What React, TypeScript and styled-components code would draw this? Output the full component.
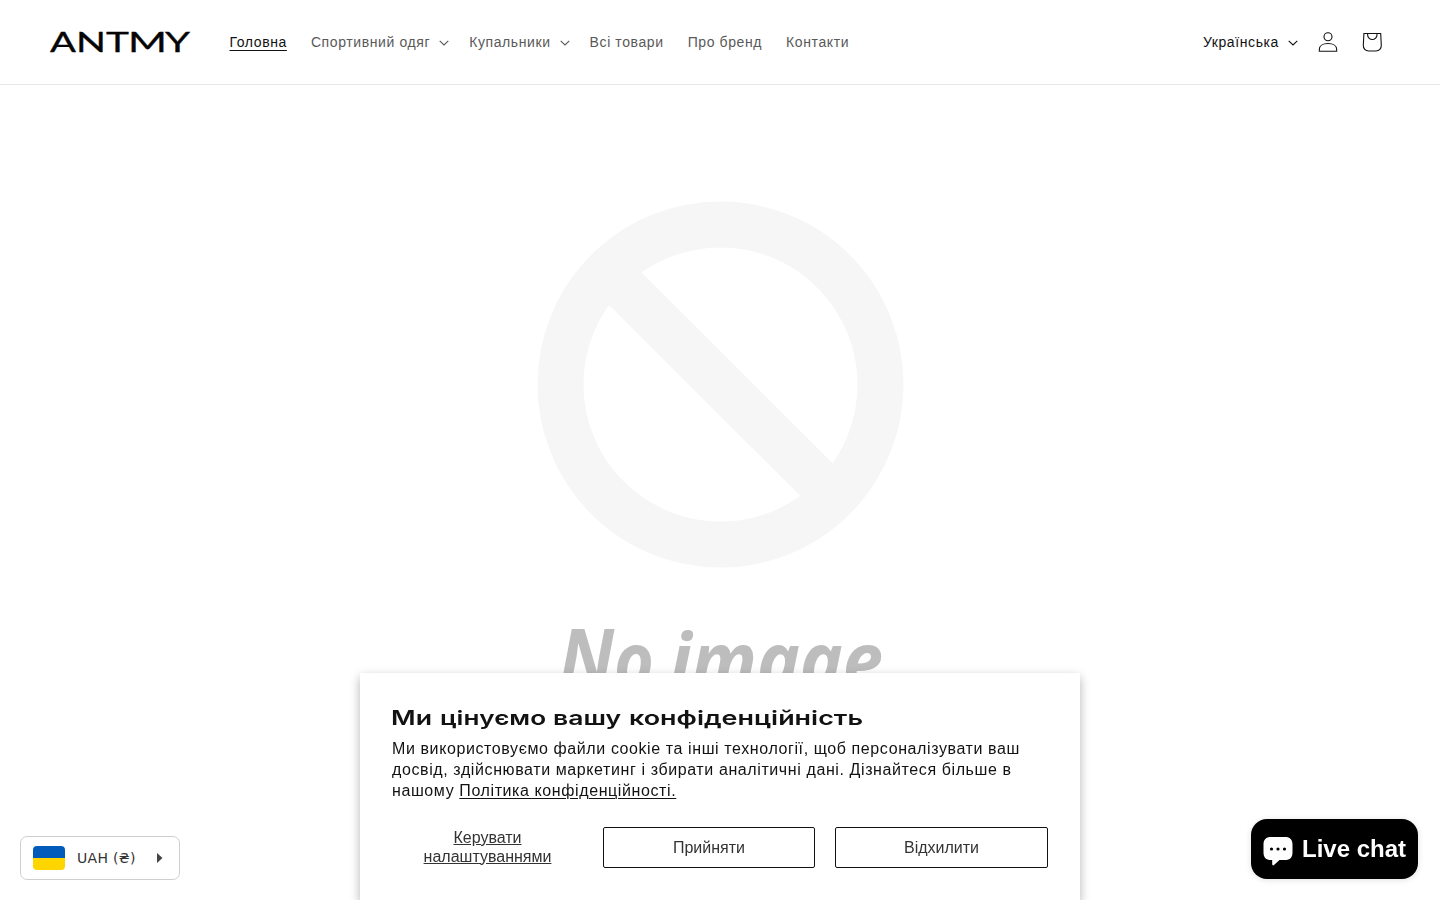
import React from 'react';
import styled, { createGlobalStyle } from 'styled-components';

const GlobalStyle = createGlobalStyle`
  * { box-sizing: border-box; }
  html, body { margin: 0; height: 100%; overflow: hidden; background: #fff; }
  body { font-family: "Liberation Sans", Arial, sans-serif; color: #121212; }
  svg { display: block; flex: none; overflow: visible; }
  a { color: inherit; }
  p, h2 { margin: 0; }
`;

const Header = styled.header`
  height: 85px;
  border-bottom: 1px solid #e7e7e7;
  padding: 0 46px 0 50px;
  display: flex;
  align-items: center;
`;

const LogoLink = styled.a`
  margin-right: 39.5px;
  text-decoration: none;
`;

const Nav = styled.nav`
  display: flex;
  gap: 24px;
  flex: 1;
`;

const NavLink = styled.a<{ $active?: boolean }>`
  display: flex;
  align-items: center;
  font-size: 14px;
  line-height: 18px;
  letter-spacing: 0.6px;
  white-space: nowrap;
  color: ${(p) => (p.$active ? '#121212' : '#595959')};
  text-decoration: ${(p) => (p.$active ? 'underline' : 'none')};
  text-underline-offset: 3px;
  text-decoration-thickness: 1px;
  svg { margin: 1px -4px 0 9px; }
`;

const Tools = styled.div`
  display: flex;
  align-items: center;
`;

const Language = styled.button`
  display: flex;
  align-items: center;
  border: 0;
  background: none;
  padding: 0;
  margin-right: 8px;
  font: 14px/18px "Liberation Sans", Arial, sans-serif;
  letter-spacing: 0.6px;
  color: #121212;
  svg { margin: 1px 0 0 9px; }
`;

const IconButton = styled.button`
  width: 44px;
  height: 44px;
  border: 0;
  padding: 0;
  background: none;
  display: grid;
  place-items: center;
`;

const Hero = styled.main`
  height: 815px;
  display: flex;
  justify-content: center;
  background: #fff;
`;

const Banner = styled.section`
  position: fixed;
  left: 50%;
  bottom: 0;
  width: 720px;
  height: 227px;
  margin-left: -360px;
  padding: 32px;
  background: #fff;
  box-shadow: 0 4px 10px rgba(0, 0, 0, 0.3);
  display: flex;
  flex-direction: column;
`;

const BannerTitle = styled.h2`
  height: 33px;
`;

const BannerText = styled.p`
  font-size: 16px;
  line-height: 21px;
  letter-spacing: 0.6px;
  white-space: nowrap;
  a { text-underline-offset: 2px; text-decoration-thickness: 1px; }
`;

const Actions = styled.div`
  display: grid;
  grid-template-columns: 191px 212px 213px;
  column-gap: 20px;
  margin-top: 26px;
  height: 41px;
`;

const ActionButton = styled.button<{ $plain?: boolean }>`
  border: ${(p) => (p.$plain ? '0' : '1px solid #121212')};
  border-radius: 2px;
  background: none;
  padding: ${(p) => (p.$plain ? '0 0 2px' : '0')};
  font: 16px/19px "Liberation Sans", Arial, sans-serif;
  color: #333;
  text-decoration: ${(p) => (p.$plain ? 'underline' : 'none')};
`;

const Currency = styled.button`
  position: fixed;
  left: 20px;
  top: 836px;
  width: 160px;
  height: 44px;
  padding: 0 16px 0 12px;
  border: 1px solid #cfcfcf;
  border-radius: 7px;
  background: #fff;
  display: flex;
  align-items: center;
  font: 14px/20px "DejaVu Sans", sans-serif;
  letter-spacing: 0.3px;
  color: #333;
`;

const Flag = styled.span`
  width: 32px;
  height: 24px;
  border-radius: 4px;
  background: linear-gradient(#005bbb 50%, #ffd500 50%);
  margin-right: 12px;
`;

const CurrencyLabel = styled.span`
  flex: 1;
  text-align: left;
  white-space: nowrap;
`;

const Chat = styled.button`
  position: fixed;
  left: 1251px;
  top: 819px;
  width: 167px;
  height: 60px;
  padding: 0 0 0 12px;
  border: 0;
  border-radius: 16px;
  background: #000;
  color: #fff;
  box-shadow: 0 1px 6px rgba(0, 0, 0, 0.12);
  display: flex;
  align-items: center;
  gap: 9px;
  font: bold 24px/28px "Liberation Sans", Arial, sans-serif;
  white-space: nowrap;
  svg { margin-top: 4px; }
`;

const LOGO_LETTERS: [string, number, number][] = [
  ['A', 0, 26],
  ['N', 26, 30],
  ['T', 56, 23],
  ['M', 78, 39],
  ['Y', 115, 25],
];

function Logo() {
  return (
    <svg width="140" height="36" viewBox="0 -5 140 36" fill="#050505" stroke="#050505" strokeWidth="0.300" fontFamily="Lato, sans-serif" fontSize="27">
      {LOGO_LETTERS.map(([letter, x, width]) => (
        <text key={letter} x={x} y="22.600" textLength={width} lengthAdjust="spacingAndGlyphs">{letter}</text>
      ))}
    </svg>
  );
}

function Caret() {
  return (
    <svg width="10" height="6" viewBox="0 0 10 6" fill="none" stroke="currentColor" strokeWidth="1.100">
      <path d="M.7.800 5 5 9.300.800" />
    </svg>
  );
}

const LINKS = [
  { label: 'Головна', active: true },
  { label: 'Спортивний одяг', menu: true },
  { label: 'Купальники', menu: true },
  { label: 'Всі товари' },
  { label: 'Про бренд' },
  { label: 'Контакти' },
];

const TITLE_WORDS: [string, number, number][] = [
  ['Ми', -1, 41],
  ['цінуємо', 48, 106],
  ['вашу', 161, 68],
  ['конфіденційність', 237, 234],
];

export default function App() {
  return (
    <>
      <GlobalStyle />
      <Header>
        <LogoLink href="#"><Logo /></LogoLink>
        <Nav>
          {LINKS.map((l) => (
            <NavLink key={l.label} href="#" $active={l.active}>
              {l.label}
              {l.menu && <Caret />}
            </NavLink>
          ))}
        </Nav>
        <Tools>
          <Language>Українська<Caret /></Language>
          <IconButton aria-label="Account">
            <svg width="20" height="20" viewBox="0 0 20 20" fill="none" stroke="#121212" strokeWidth="1.100">
              <circle cx="10" cy="4.800" r="4" />
              <path d="M1.300 19.200v-1.700c0-3.600 3.400-6 8.700-6s8.700 2.400 8.700 6v1.700z" />
            </svg>
          </IconButton>
          <IconButton aria-label="Cart">
            <svg width="20" height="20" viewBox="0 0 20 20" fill="none" stroke="#121212" strokeWidth="1.100">
              <path d="M1.900 1.500h16.800l.6 11.700c.1 3.400-2.100 5.800-5.400 5.800H6.700c-3.300 0-5.500-2.400-5.400-5.800z" />
              <path d="M5.600 1.500v1.300a4.700 4.700 0 0 0 9.400 0V1.500" />
            </svg>
          </IconButton>
        </Tools>
      </Header>
      <Hero>
        <svg width="815" height="815" viewBox="0 0 815 815">
          <g fill="none" stroke="#f6f6f6" strokeWidth="46">
            <circle cx="407.500" cy="299.500" r="160" />
            <path d="M295 186.500 518 409" />
          </g>
          <g fill="#bdbdbd" fontFamily="Noto Sans, sans-serif" fontWeight="700" fontStyle="italic" fontSize="75">
            <text x="246" y="602" textLength="95" lengthAdjust="spacingAndGlyphs"><tspan fontSize="80">N</tspan>o</text>
            <text x="357" y="602" textLength="213" lengthAdjust="spacingAndGlyphs">image</text>
          </g>
        </svg>
      </Hero>
      <Banner>
        <BannerTitle>
          <svg width="480" height="33" viewBox="0 0 480 33" fill="#121212" fontFamily="Inter, sans-serif" fontWeight="600" fontSize="20">
            {TITLE_WORDS.map(([word, x, width]) => (
              <text key={word} x={x} y="20" textLength={width} lengthAdjust="spacingAndGlyphs">{word}</text>
            ))}
          </svg>
        </BannerTitle>
        <BannerText>
          Ми використовуємо файли cookie та інші технології, щоб персоналізувати ваш<br />
          досвід, здійснювати маркетинг і збирати аналітичні дані. Дізнайтеся більше в<br />
          нашому <a href="#">Політика конфіденційності.</a>
        </BannerText>
        <Actions>
          <ActionButton $plain>Керувати<br />налаштуваннями</ActionButton>
          <ActionButton>Прийняти</ActionButton>
          <ActionButton>Відхилити</ActionButton>
        </Actions>
      </Banner>
      <Currency>
        <Flag />
        <CurrencyLabel>UAH (₴)</CurrencyLabel>
        <svg width="6" height="10" viewBox="0 0 6 10"><path d="M0 0 5.500 5 0 10z" fill="#444" /></svg>
      </Currency>
      <Chat>
        <svg width="30" height="30" viewBox="0 0 30 30">
          <path d="M8 1h14c5 0 7.500 2.500 7.500 7.500v8c0 5-2.500 7.500-7.500 7.500h-5.500l-5.500 5c-.8.700-1.800.400-1.800-.7V24H8C3 24 .5 21.500.5 16.500v-8C.5 3.500 3 1 8 1z" fill="#fff" />
          <g fill="#000"><circle cx="8.500" cy="13" r="1.600" /><circle cx="15" cy="13" r="1.600" /><circle cx="21.500" cy="13" r="1.600" /></g>
        </svg>
        Live chat
      </Chat>
    </>
  );
}
